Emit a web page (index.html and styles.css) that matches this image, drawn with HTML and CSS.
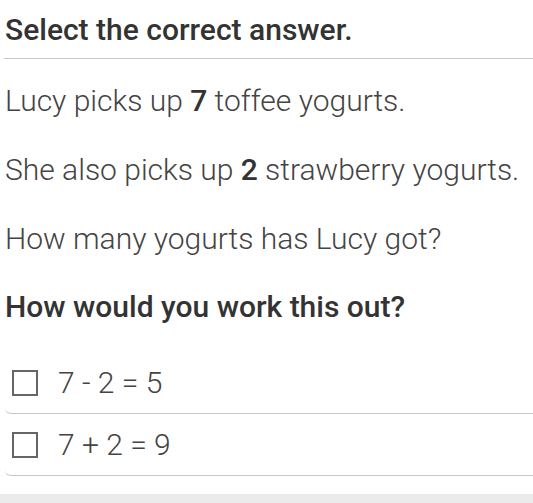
FILE: index.html
```html
<!DOCTYPE html>
<html>
<head>
<meta charset="utf-8">
<link rel="stylesheet" href="styles.css">
</head>
<body>
<div class="card">
  <h1 class="title">Select the correct answer.</h1>
  <div class="question">
    <p class="line">Lucy picks up <b>7</b> toffee yogurts.</p>
    <p class="line">She also picks up <b>2</b> strawberry yogurts.</p>
    <p class="line">How many yogurts has Lucy got?</p>
    <h2 class="prompt">How would you work this out?</h2>
  </div>
  <div class="options">
    <label class="option"><span class="box"></span><span class="opt-text">7 - 2 = 5</span></label>
    <label class="option"><span class="box"></span><span class="opt-text">7 + 2 = 9</span></label>
  </div>
</div>
</body>
</html>
```
FILE: styles.css
```css
html, body {
  margin: 0;
  padding: 0;
  background: #ebebeb;
}
body {
  font-family: Roboto, "Liberation Sans", sans-serif;
  color: #444;
  overflow: hidden;
}
.card {
  background: #fff;
  box-sizing: border-box;
  height: 494px;
  box-shadow: 0 3px 6px rgba(0,0,0,0.12);
}
.title {
  margin: 0 0 0 4px;
  padding: 13px 0 11px 1px;
  font-size: 30px;
  font-weight: 500;
  line-height: 34px;
  color: #333;
  border-bottom: 1px solid #c6c6c6;
}
.question {
  padding: 0 0 0 5px;
  display: flex;
  flex-direction: column;
}
.line {
  margin: 0;
  font-size: 30px;
  font-weight: 300;
  line-height: 36px;
  color: #444;
}
.line:first-child { margin-top: 24px; }
.line + .line { margin-top: 33px; }
.line b { font-weight: 500; color: #333; }
.prompt {
  margin: 32px 0 0 0;
  font-size: 30px;
  font-weight: 500;
  line-height: 36px;
  color: #333;
}
.options {
  margin-top: 27px;
  padding-left: 5px;
  display: flex;
  flex-direction: column;
}
.option {
  display: flex;
  align-items: center;
  gap: 20px;
  height: 61px;
  padding-left: 7px;
  border-bottom: 1px solid #c6c6c6;
  border-radius: 0 0 0 6px;
}
.box {
  width: 22px;
  height: 22px;
  border: 2px solid #666;
  flex: none;
}
.opt-text {
  font-size: 30px;
  font-weight: 300;
  color: #444;
}
```
